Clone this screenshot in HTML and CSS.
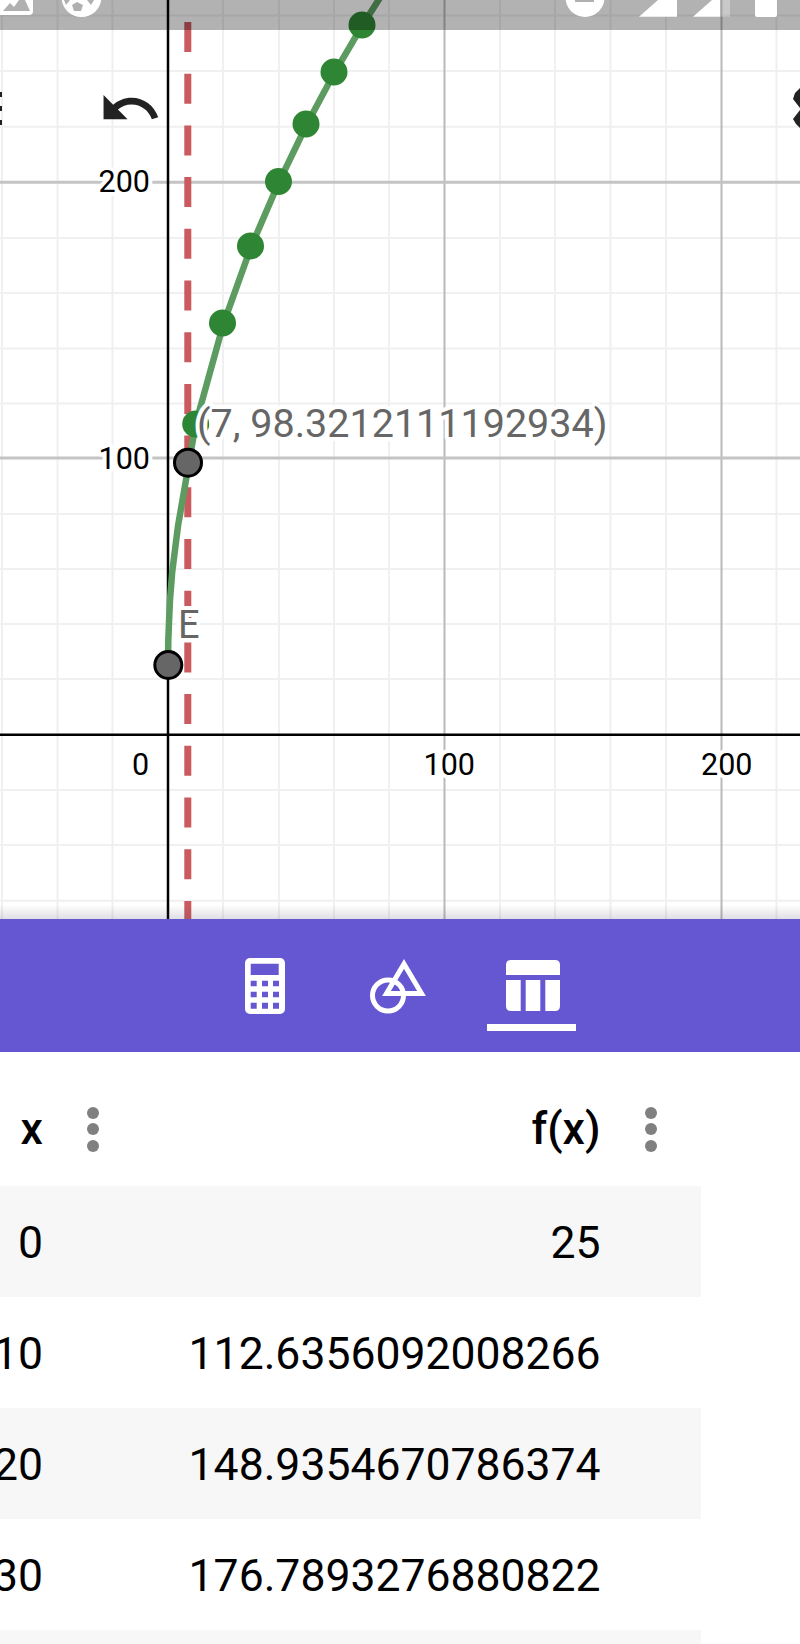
FILE: index.html
```html
<!doctype html>
<html lang="en">
<head>
<meta charset="utf-8">
<title>GeoGebra Graphing - f(x) table</title>
<link rel="stylesheet" href="styles.css">
</head>
<body>

<main class="page">

	<section class="graph">

		<svg class="plot" viewBox="0 0 800 919" width="800" height="919">

			<path class="gridMinor" d="M2 0V919M57.5 0V919M112.5 0V919M223 0V919M279 0V919M334 0V919M389 0V919M500 0V919M555 0V919M610.5 0V919M666 0V919M776.5 0V919
				M0 15.5H800M0 71H800M0 126.7H800M0 238H800M0 293H800M0 348.5H800M0 403.5H800M0 514H800M0 569H800M0 624H800M0 679H800M0 790H800M0 845H800M0 900.7H800" />
			<path class="gridMajor" d="M444.5 0V919M721.5 0V919" />
			<path class="gridMajorWide" d="M0 182.3H800M0 458H800" />
			<path class="axis" d="M168 0V919M0 734.7H800" />

			<path class="asymptote" d="M187.8 22V919" />

			<path class="curve" d="M168 666L168.3 640L169 622L170 600L172.2 572L178 526L195.7 424L223.4 324L251 247L279 182L306.5 125L334 73.5L362 26L390 -18" />

			<circle class="sample" cx="195.7" cy="424" r="13.5" />
			<circle class="sample" cx="222.5" cy="323" r="13.5" />
			<circle class="sample" cx="250.5" cy="246" r="13.5" />
			<circle class="sample" cx="278.5" cy="181.5" r="13.5" />
			<circle class="sample" cx="306" cy="124" r="13.5" />
			<circle class="sample" cx="334" cy="72" r="13.5" />
			<circle class="sample" cx="362" cy="25" r="13.5" />

			<text class="tick" x="150" y="191.5" text-anchor="end">200</text>
			<text class="tick" x="150" y="469" text-anchor="end">100</text>
			<text class="tick" x="132" y="775">0</text>
			<text class="tick" x="423.5" y="775">100</text>
			<text class="tick" x="701" y="775">200</text>

			<text class="pointLabel pointLabelBig" x="197" y="436.7">(7, 98.3212111192934)</text>
			<text class="pointLabel" x="178" y="638">E</text>

			<circle class="point" cx="188" cy="462.7" r="13.5" />
			<circle class="point" cx="168.3" cy="665" r="13.5" />

			<!-- undo, and the two buttons cut off by the screen edges -->
			<path class="toolIcon" transform="translate(98.2 76.1) scale(2.67 2.7)" d="M12.5 8c-2.65 0-5.05.99-6.9 2.6L2 7v9h9l-3.62-3.62c1.39-1.16 3.16-1.88 5.12-1.88 3.54 0 6.55 2.31 7.6 5.5l2.37-.78C21.08 11.03 17.15 8 12.5 8z" />
			<path class="toolIcon" d="M0 92H2V97H0ZM0 106H2V111H0ZM0 120H2V125H0Z" />
			<path class="toolIcon" d="M800 88L795 93L793 99L800 108ZM800 110L793 119L796 124L800 128Z" />

		</svg>

		<div class="barShadow"></div>

		<div class="statusBar">
			<svg viewBox="0 0 800 30" width="800" height="30">
				<path class="statusIcon" d="M0 0H33V11Q33 15 29 15H0Z" />
				<path class="statusCut" d="M3 11L10 3L14 7L19 0H25L30 11Z" />
				<circle class="statusIcon" cx="81.5" cy="-3" r="20" />
				<path class="statusCut" d="M72 5L77 2L83 5L81 11L74 11ZM87 0H94L91 5ZM64 0H70L66 5Z" />
				<circle class="statusIcon" cx="585" cy="-2.5" r="19.5" />
				<rect class="statusCut" x="575" y="0" width="19" height="2" />
				<path class="statusIcon" d="M658 0H677V16.7H639Z" />
				<path class="statusIcon" d="M712 0H720V16.7H693Z" />
				<rect class="statusDim" x="720" y="0" width="10" height="16.7" />
				<path class="statusIcon" d="M755 0H777V15Q777 17 775 17H757Q755 17 755 15Z" />
			</svg>
		</div>

	</section>

	<nav class="tabBar">

		<div class="tab">
			<svg viewBox="0 0 40 56" width="40" height="56">
				<rect class="tabFill" width="40" height="56" rx="5" />
				<path class="tabCut" d="M5.7 5.7H33.7V17H5.7Z
					M5.7 22.7H11.7V28.3H5.7ZM17 22.7H23V28.3H17ZM28 22.7H34V28.3H28Z
					M5.7 33.7H11.7V39.3H5.7ZM17 33.7H23V39.3H17ZM28 33.7H34V39.3H28Z
					M5.7 44.7H11.7V50.7H5.7ZM17 44.7H23V50.7H17ZM28 44.7H34V50.7H28Z" />
			</svg>
		</div>

		<div class="tab tabGeometry">
			<svg viewBox="0 0 56 56" width="56" height="56">
				<circle class="tabLine" cx="18" cy="37.5" r="15.5" />
				<path class="tabLine" d="M34 6L51.5 35.5H16.5Z" />
			</svg>
		</div>

		<div class="tab tabActive">
			<svg viewBox="0 0 54 56" width="54" height="56">
				<path class="tabFill" d="M5 2H49Q54 2 54 7V17H0V7Q0 2 5 2Z
					M0 22H14.7V53H5Q0 53 0 48Z
					M19.7 22H34.3V53H19.7Z
					M39.3 22H54V48Q54 53 49 53H39.3Z" />
			</svg>
			<div class="tabUnderline"></div>
		</div>

	</nav>

	<section class="valueTable">

		<div class="tableHead">
			<div class="cellX">x</div>
			<div class="kebab kebabX"><span></span><span></span><span></span></div>
			<div class="cellHeadFx">f(x)</div>
			<div class="kebab kebabFx"><span></span><span></span><span></span></div>
		</div>

		<div class="row"><div class="cellX">0</div><div class="cellFx">25</div></div>
		<div class="row"><div class="cellX">10</div><div class="cellFx">112.6356092008266</div></div>
		<div class="row"><div class="cellX">20</div><div class="cellFx">148.9354670786374</div></div>
		<div class="row"><div class="cellX">30</div><div class="cellFx">176.7893276880822</div></div>
		<div class="row"></div>

	</section>

</main>

</body>
</html>
```

FILE: styles.css
```css
* { box-sizing: border-box; }

html, body { margin: 0; height: 100%; }

body { background-color: #fff; color: #000; font-family: Roboto, "Liberation Sans", sans-serif; }

.page { height: 1644px; overflow: hidden; width: 800px; }


/* graph */

.graph { height: 919px; overflow: hidden; position: relative; }

.plot { display: block; }

.plot text { font-family: Roboto, "Liberation Sans", sans-serif; paint-order: stroke; stroke: #fff; stroke-linejoin: round; }

.gridMinor { fill: none; stroke: #f0f0f0; stroke-width: 2; }
.gridMajor { fill: none; stroke: #bababa; stroke-width: 2; }
.gridMajorWide { fill: none; stroke: #c4c4c4; stroke-width: 3; }
.axis { fill: none; stroke: #000; stroke-width: 2.5; }

.asymptote { fill: none; stroke: #cb5a5f; stroke-dasharray: 30 21.7; stroke-width: 7; }

.curve { fill: none; stroke: #5c9c60; stroke-width: 6.5; }
.sample { fill: #2e8534; }

.point { fill: #666; stroke: #000; stroke-width: 3; }

.tick { fill: #000; font-size: 30.5px; stroke-width: 8; }

.pointLabel { fill: #666; font-size: 38px; stroke-width: 8; }
.pointLabelBig { font-size: 39.5px; }

.toolIcon { fill: #222; }

.barShadow { background: linear-gradient( rgba( 60, 60, 90, 0 ), rgba( 60, 60, 90, 0.16 ) ); bottom: 0; height: 14px;
	left: 0; position: absolute; right: 0; }

.statusBar { background-color: rgba( 0, 0, 0, 0.3 ); height: 30px; left: 0; position: absolute; right: 0; top: 0; }

.statusBar svg { display: block; }

.statusIcon { fill: #fff; }
.statusCut { fill: #b0b0b0; }
.statusDim { fill: #fff; opacity: 0.3; }


/* tabs */

.tabBar { align-items: flex-start; background-color: #6557d2; display: flex; height: 133px; padding: 39px 0 0 245px; }

.tab svg { display: block; }

.tabGeometry { margin-left: 85px; }

.tabActive { margin-left: 61px; width: 89px; }
.tabActive svg { margin-left: 19px; }

.tabFill { fill: #fff; }
.tabCut { fill: #6557d2; }
.tabLine { fill: none; stroke: #fff; stroke-width: 5; }

.tabUnderline { background-color: #fff; height: 6.5px; margin-top: 10px; }


/* table */

.valueTable { font-size: 44.5px; line-height: 52px; width: 700.5px; }

.tableHead { align-items: center; display: grid; font-weight: 500; grid-template-columns: 43px 100px 457.5px auto; height: 134px; padding-top: 20px; }

.row { align-items: center; display: flex; height: 111px; padding-top: 2px; }
.row:nth-child( even ) { background-color: #f7f7f7; }

.cellX { display: flex; justify-content: flex-end; width: 43px; }

.cellFx { text-align: right; width: 557.5px; }

.cellHeadFx { text-align: right; }

.kebab { display: flex; flex-direction: column; gap: 4.5px; }
.kebab span { background-color: #808080; border-radius: 50%; height: 12px; width: 12px; }

.kebabX { padding-left: 43.5px; }
.kebabFx { padding-left: 44.5px; }
```
